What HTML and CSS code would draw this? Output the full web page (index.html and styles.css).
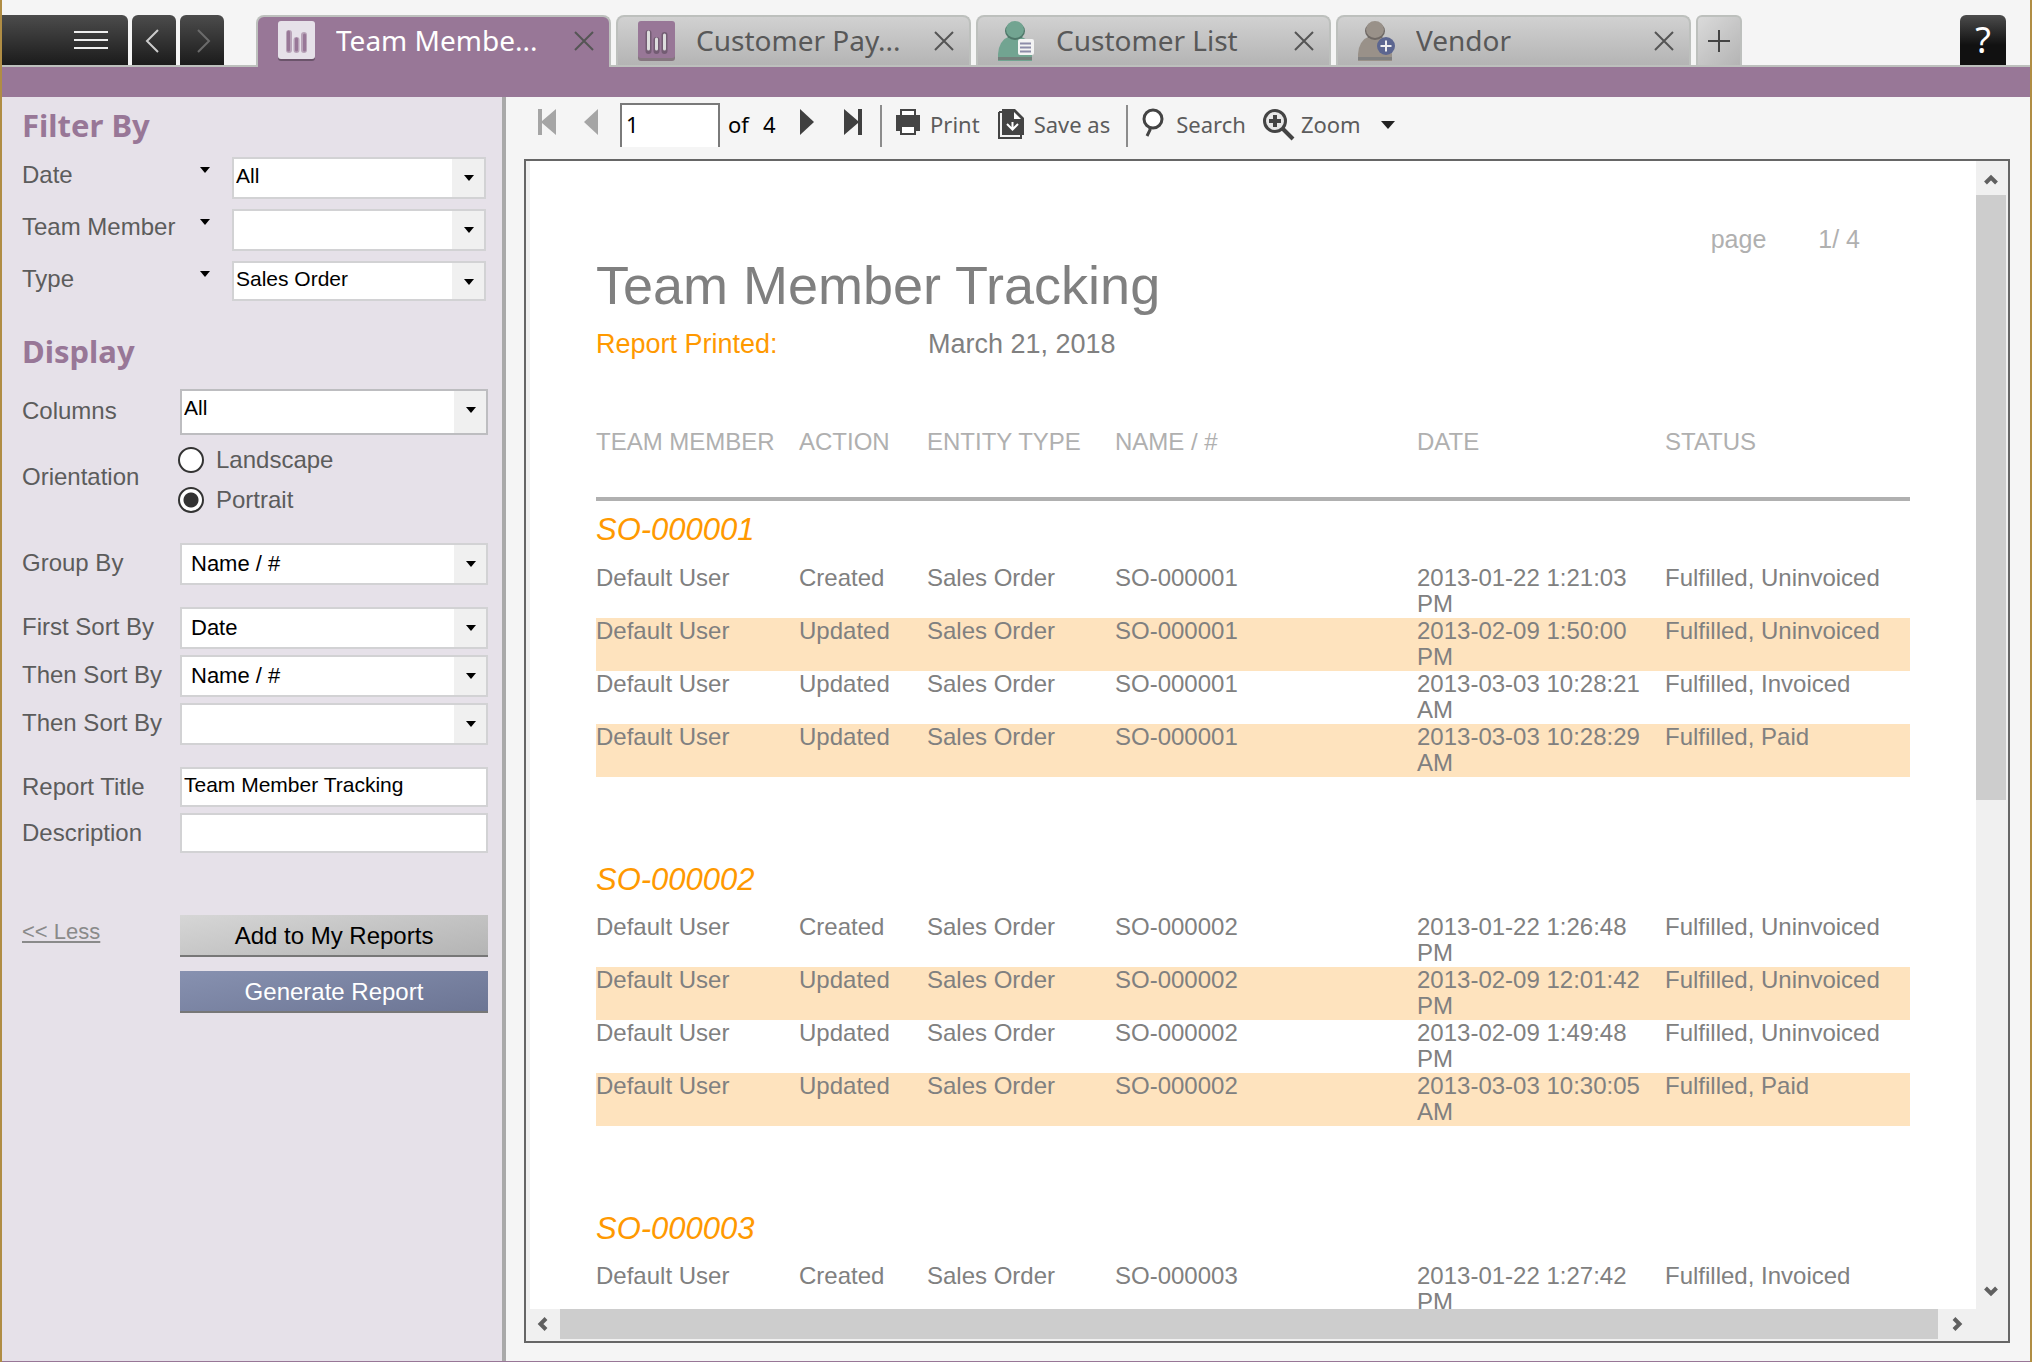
FILE: index.html
```html
<!DOCTYPE html>
<html lang="en">
<head>
<meta charset="utf-8">
<title>Team Member Tracking</title>
<link rel="stylesheet" href="styles.css">
</head>
<body>
<div class="app">
  <header class="topbar">
    <button class="dark menu" aria-label="Menu"><svg width="36" height="50" viewBox="0 0 36 50"><path d="M1 17h34M1 25h34M1 33h34" stroke="#eee" stroke-width="2"/></svg></button>
    <button class="dark nav" aria-label="Back"><svg width="44" height="50" viewBox="0 0 44 50"><path d="M26 15L15 26L26 37" fill="none" stroke="#ccc" stroke-width="2"/></svg></button>
    <button class="dark nav" aria-label="Forward"><svg width="44" height="50" viewBox="0 0 44 50"><path d="M18 15L29 26L18 37" fill="none" stroke="#6b6b6b" stroke-width="2"/></svg></button>
    <nav class="tabs">
      <div class="tab active">
        <svg class="tab-icon" width="37" height="40" viewBox="0 0 37 40"><rect y="4" width="37" height="36" rx="3" fill="#6b546b"/><rect width="37" height="38" rx="3" fill="#e6e1e9"/><path d="M11 12v17M18.500 19v10M26 14v15" stroke="#b8a3b8" stroke-width="6" stroke-linecap="round"/><path d="M10.500 11v18M18.500 18v11M26.500 14v15" stroke="#987797" stroke-width="3" stroke-linecap="round"/></svg>
        <a href="#" class="tab-name">Team Membe...</a>
        <button class="close" aria-label="Close"><svg width="20" height="20" viewBox="0 0 20 20"><path d="M1 1L19 19M19 1L1 19" stroke="#555" stroke-width="2"/></svg></button>
      </div>
      <div class="tab">
        <svg class="tab-icon" width="37" height="40" viewBox="0 0 37 40"><rect y="4" width="37" height="36" rx="3" fill="#85767f"/><rect width="37" height="37" rx="3" fill="#987797"/><path d="M10.500 12v18M18.500 19v11M26.500 14v16" stroke="#735c73" stroke-width="6" stroke-linecap="round"/><path d="M10.500 11v17M18.500 18v10M26.500 14v14" stroke="#ddd" stroke-width="3" stroke-linecap="round"/></svg>
        <a href="#" class="tab-name">Customer Pay...</a>
        <button class="close" aria-label="Close"><svg width="20" height="20" viewBox="0 0 20 20"><path d="M1 1L19 19M19 1L1 19" stroke="#555" stroke-width="2"/></svg></button>
      </div>
      <div class="tab">
        <svg class="tab-icon" width="37" height="40" viewBox="0 0 37 40"><path d="M0 40V33Q1 19 12 15H22Q33 19 34 33V40Z" fill="#72a491"/><path d="M0 36H34V39H0Z" fill="#74807b"/><ellipse cx="17" cy="10" rx="10" ry="9" fill="#4f7769"/><ellipse cx="17" cy="8.500" rx="9" ry="8.500" fill="#72a491"/><rect x="20" y="18" width="16" height="16" rx="2" fill="#f3f3f3"/><path d="M22 22.500h11M22 26.500h11M22 30.500h11" stroke="#8c8ca8" stroke-width="2"/></svg>
        <a href="#" class="tab-name">Customer List</a>
        <button class="close" aria-label="Close"><svg width="20" height="20" viewBox="0 0 20 20"><path d="M1 1L19 19M19 1L1 19" stroke="#555" stroke-width="2"/></svg></button>
      </div>
      <div class="tab">
        <svg class="tab-icon" width="37" height="40" viewBox="0 0 37 40"><path d="M0 40V33Q1 19 12 15H22Q33 19 34 33V40Z" fill="#999189"/><path d="M0 36H34V39H0Z" fill="#808080"/><ellipse cx="17" cy="10" rx="10" ry="9" fill="#6e6864"/><ellipse cx="17" cy="8.500" rx="9" ry="8.500" fill="#999189"/><circle cx="28" cy="25" r="9" fill="#5c6690"/><path d="M22.500 25h11M28 19.500v11" stroke="#eee" stroke-width="2"/></svg>
        <a href="#" class="tab-name">Vendor</a>
        <button class="close" aria-label="Close"><svg width="20" height="20" viewBox="0 0 20 20"><path d="M1 1L19 19M19 1L1 19" stroke="#555" stroke-width="2"/></svg></button>
      </div>
      <button class="tab-add" aria-label="New tab"><svg width="22" height="22" viewBox="0 0 22 22"><path d="M0 11h22M11 0v22" stroke="#444" stroke-width="2"/></svg></button>
    </nav>
    <button class="dark help" aria-label="Help">?</button>
  </header>
  <div class="band"></div>

  <div class="body">
    <form class="sidebar">
      <h2>Filter By</h2>
      <div class="filters">
        <label for="f-date">Date</label><i class="arrow"></i>
        <span class="select raised"><select id="f-date"><option>All</option></select></span>
        <label for="f-member">Team Member</label><i class="arrow"></i>
        <span class="select raised"><select id="f-member"><option></option></select></span>
        <label for="f-type">Type</label><i class="arrow"></i>
        <span class="select raised short"><select id="f-type"><option>Sales Order</option></select></span>
      </div>

      <h2 class="second">Display</h2>
      <div class="row columns">
        <label for="d-columns">Columns</label>
        <span class="select raised tall"><select id="d-columns"><option>All</option></select></span>
      </div>
      <div class="row orientation" role="radiogroup" aria-labelledby="orient">
        <span class="legend" id="orient">Orientation</span>
        <div class="radios">
          <label><input type="radio" name="orientation">Landscape</label>
          <label><input type="radio" name="orientation" checked>Portrait</label>
        </div>
      </div>
      <div class="row group">
        <label for="d-group">Group By</label>
        <span class="select"><select id="d-group"><option>Name / #</option></select></span>
      </div>
      <div class="row block">
        <label for="d-sort1">First Sort By</label>
        <span class="select"><select id="d-sort1"><option>Date</option></select></span>
      </div>
      <div class="row">
        <label for="d-sort2">Then Sort By</label>
        <span class="select"><select id="d-sort2"><option>Name / #</option></select></span>
      </div>
      <div class="row">
        <label for="d-sort3">Then Sort By</label>
        <span class="select"><select id="d-sort3"><option></option></select></span>
      </div>
      <div class="row block">
        <label for="d-title">Report Title</label>
        <input class="text" id="d-title" type="text" value="Team Member Tracking">
      </div>
      <div class="row">
        <label for="d-desc">Description</label>
        <input class="text" id="d-desc" type="text">
      </div>
      <div class="row actions">
        <a href="#" class="less">&lt;&lt; Less</a>
        <div class="buttons">
          <button type="button" class="btn">Add to My Reports</button>
          <button type="button" class="btn primary">Generate Report</button>
        </div>
      </div>
    </form>

    <main class="viewer">
      <div class="toolbar">
        <button class="tool first" aria-label="First page"><svg width="18" height="44" viewBox="0 0 18 44"><path d="M0 6h4v12L18 6v26L4 20v12H0z" fill="#a5a5a5"/></svg></button>
        <button class="tool prev" aria-label="Previous page"><svg width="14" height="44" viewBox="0 0 14 44"><path d="M14 6v26L0 19z" fill="#a5a5a5"/></svg></button>
        <input class="page-no" type="text" value="1" aria-label="Page">
        <span class="total"><span>of</span><span>4</span></span>
        <button class="tool next" aria-label="Next page"><svg width="14" height="44" viewBox="0 0 14 44"><path d="M0 6v26L14 19z" fill="#404040"/></svg></button>
        <button class="tool last" aria-label="Last page"><svg width="18" height="44" viewBox="0 0 18 44"><path d="M18 6h-4v12L0 6v26L14 20v12h4z" fill="#404040"/></svg></button>
        <span class="sep"></span>
        <button class="tool print"><svg width="24" height="44" viewBox="0 0 24 44"><path d="M4 6h16v6h4v16h-4v4H4v-4H0V12h4z" fill="#444"/><path d="M6 8h12v4H6zM6 24h12v6H6z" fill="#fff"/></svg>Print</button>
        <button class="tool save"><svg width="26" height="44" viewBox="0 0 26 44"><path d="M1 9v26h22v-4M1 9h4" fill="none" stroke="#444" stroke-width="2"/><path d="M4 6h13l9 9v17H4z" fill="#444"/><path d="M16 9v7h7z" fill="#fff"/><path d="M14.500 19v8M9 21l5.500 5.500L20 21" fill="none" stroke="#fff" stroke-width="2"/></svg>Save as</button>
        <span class="sep second"></span>
        <button class="tool search"><svg width="22" height="44" viewBox="0 0 22 44"><circle cx="11" cy="16" r="9" fill="#fff" stroke="#444" stroke-width="3"/><path d="M8 24v3L5 33" fill="none" stroke="#444" stroke-width="3"/></svg>Search</button>
        <button class="tool zoom"><svg width="33" height="44" viewBox="0 0 33 44"><circle cx="13" cy="18" r="10.500" fill="#e8e8e8" stroke="#444" stroke-width="3"/><path d="M13 12v12M7 18h12" stroke="#444" stroke-width="4"/><path d="M20 25l11 11" stroke="#444" stroke-width="4"/></svg>Zoom<svg class="caret" width="14" height="8" viewBox="0 0 14 8"><path d="M0 0h14L7 8z" fill="#222"/></svg></button>
      </div>

      <div class="frame">
        <div class="page">
          <p class="page-count"><span>page</span><span>1/ 4</span></p>
          <h1>Team Member Tracking</h1>
          <dl class="printed"><dt>Report Printed:</dt><dd>March 21, 2018</dd></dl>
          <table>
            <colgroup><col class="c-member"><col class="c-action"><col class="c-type"><col class="c-name"><col class="c-date"><col></colgroup>
            <thead><tr><th>TEAM MEMBER</th><th>ACTION</th><th>ENTITY TYPE</th><th>NAME / #</th><th>DATE</th><th>STATUS</th></tr></thead>
            <tbody>
              <tr class="so"><th colspan="6">SO-000001</th></tr>
              <tr><td>Default User</td><td>Created</td><td>Sales Order</td><td>SO-000001</td><td>2013-01-22 1:21:03 PM</td><td>Fulfilled, Uninvoiced</td></tr>
              <tr class="alt"><td>Default User</td><td>Updated</td><td>Sales Order</td><td>SO-000001</td><td>2013-02-09 1:50:00 PM</td><td>Fulfilled, Uninvoiced</td></tr>
              <tr><td>Default User</td><td>Updated</td><td>Sales Order</td><td>SO-000001</td><td>2013-03-03 10:28:21 AM</td><td>Fulfilled, Invoiced</td></tr>
              <tr class="alt"><td>Default User</td><td>Updated</td><td>Sales Order</td><td>SO-000001</td><td>2013-03-03 10:28:29 AM</td><td>Fulfilled, Paid</td></tr>
            </tbody>
            <tbody>
              <tr class="so"><th colspan="6">SO-000002</th></tr>
              <tr><td>Default User</td><td>Created</td><td>Sales Order</td><td>SO-000002</td><td>2013-01-22 1:26:48 PM</td><td>Fulfilled, Uninvoiced</td></tr>
              <tr class="alt"><td>Default User</td><td>Updated</td><td>Sales Order</td><td>SO-000002</td><td>2013-02-09 12:01:42 PM</td><td>Fulfilled, Uninvoiced</td></tr>
              <tr><td>Default User</td><td>Updated</td><td>Sales Order</td><td>SO-000002</td><td>2013-02-09 1:49:48 PM</td><td>Fulfilled, Uninvoiced</td></tr>
              <tr class="alt"><td>Default User</td><td>Updated</td><td>Sales Order</td><td>SO-000002</td><td>2013-03-03 10:30:05 AM</td><td>Fulfilled, Paid</td></tr>
            </tbody>
            <tbody>
              <tr class="so"><th colspan="6">SO-000003</th></tr>
              <tr><td>Default User</td><td>Created</td><td>Sales Order</td><td>SO-000003</td><td>2013-01-22 1:27:42 PM</td><td>Fulfilled, Invoiced</td></tr>
            </tbody>
          </table>
        </div>
        <div class="vbar">
          <button aria-label="Scroll up"><svg width="30" height="34" viewBox="0 0 30 34"><path d="M9.500 22L15 16.500L20.500 22" fill="none" stroke="#606060" stroke-width="4"/></svg></button>
          <div class="vtrack"><div class="vthumb"></div></div>
          <button aria-label="Scroll down"><svg width="30" height="34" viewBox="0 0 30 34"><path d="M9.500 13L15 18.500L20.500 13" fill="none" stroke="#606060" stroke-width="4"/></svg></button>
        </div>
        <div class="hbar">
          <button aria-label="Scroll left"><svg width="34" height="30" viewBox="0 0 34 30"><path d="M20 9.500L14.500 15L20 20.500" fill="none" stroke="#606060" stroke-width="4"/></svg></button>
          <div class="hthumb"></div>
          <button aria-label="Scroll right"><svg width="38" height="30" viewBox="0 0 38 30"><path d="M16 9.500L21.500 15L16 20.500" fill="none" stroke="#606060" stroke-width="4"/></svg></button>
        </div>
        <div class="corner"></div>
      </div>
    </main>
  </div>
</div>
</body>
</html>
```

FILE: styles.css
```css
* { box-sizing: border-box; }

body {
  margin: 0;
  background: #f5f5f5;
  color: #5c5c5c;
  font-family: "Liberation Sans", Arial, sans-serif;
  font-size: 24px;
}

button {
  border: 0;
  padding: 0;
  background: none;
  color: inherit;
  font: inherit;
}

svg { display: block; flex: none; }

.app {
  display: flex;
  flex-direction: column;
  height: 100vh;
  border: solid #b08d44;
  border-width: 0 2px;
  box-shadow: inset 0 -1px #987797;
}

/* Top bar */
.topbar {
  display: flex;
  flex: none;
  gap: 4px;
  padding: 15px 24px 0 0;
  border-bottom: 2px solid #bdc0bd;
  font-family: "Noto Sans", "Open Sans", sans-serif;
}

.dark {
  height: 50px;
  border-radius: 6px 6px 0 0;
  background: linear-gradient(#4c4c4c, #1b1b1b);
}

.menu {
  display: flex;
  justify-content: flex-end;
  width: 126px;
  padding-right: 19px;
  border-radius: 0 6px 0 0;
}

.nav { width: 44px; }

.help {
  width: 46px;
  margin-left: auto;
  background: linear-gradient(#4c4c4c, #111 60%);
  color: #fff;
  font-size: 36px;
  line-height: 50px;
}

.tabs {
  display: flex;
  flex: 0 1 1488px;
  gap: 5px;
  min-width: 0;
  margin-left: 28px;
}

.tab {
  display: flex;
  flex: 0 1 355px;
  align-items: center;
  height: 50px;
  padding: 0 15px 0 20px;
  border: solid #bdc0bd;
  border-width: 2px 2px 0;
  border-radius: 8px 8px 0 0;
  background: linear-gradient(#d1d1d1, #b4b4b4);
}

.tab.active {
  height: 52px;
  margin-bottom: -2px;
  padding-bottom: 2px;
  background: #987797;
}

.tab-name {
  flex: 1;
  margin-left: 21px;
  padding-bottom: 2px;
  overflow: hidden;
  color: #585858;
  font-size: 28px;
  line-height: 42px;
  text-decoration: none;
  white-space: nowrap;
}

.active .tab-name { color: #fff; }

.tab-add {
  display: flex;
  align-items: center;
  justify-content: center;
  width: 46px;
  height: 50px;
  border: solid #bdc0bd;
  border-width: 2px 2px 0;
  border-radius: 6px 6px 0 0;
  background: linear-gradient(135deg, #dadada, #b4b4b4);
}

.band { flex: none; height: 30px; background: #987797; }

.body { display: flex; flex: 1; min-height: 0; padding-bottom: 1px; }

/* Sidebar */
.sidebar {
  flex: none;
  width: 504px;
  padding: 8px 14px 0 20px;
  border-right: 4px solid #a9a9a9;
  background: #e6e1e9;
}

h2 {
  margin: 0 0 12px;
  color: #987797;
  font: bold 31px/40px "Noto Sans", "Open Sans", sans-serif;
}

h2.second { margin: 30px 0 18px; }

.filters {
  display: grid;
  grid-template-columns: 178px 32px 1fr;
  gap: 10px 0;
  padding-right: 2px;
  line-height: 36px;
}

.arrow {
  width: 10px;
  height: 6px;
  margin-top: 10px;
  background: #000;
  clip-path: polygon(0 0, 100% 0, 50% 100%);
}

.select { position: relative; display: block; height: 42px; }

.select::after {
  content: "";
  position: absolute;
  top: 18px;
  right: 12px;
  width: 10px;
  height: 6px;
  background: #000;
  clip-path: polygon(0 0, 100% 0, 50% 100%);
  pointer-events: none;
}

select {
  display: block;
  width: 100%;
  height: 100%;
  padding: 0 34px 2px 9px;
  border: 2px solid #d2d2d4;
  border-radius: 0;
  appearance: none;
  background: linear-gradient(#f0f0f0, #f0f0f0) right / 32px 100% no-repeat #fff;
  color: #000;
  font: 22px "Liberation Sans", Arial, sans-serif;
}

.raised select { padding: 0 34px 6px 2px; font-size: 21px; }
.select.short { height: 40px; }
.select.tall { height: 46px; }
.tall select { padding-bottom: 10px; border-color: #bdbdc0; }

.row {
  display: grid;
  grid-template-columns: 158px 1fr;
  margin-top: 6px;
  line-height: 40px;
}

.columns { margin-top: 0; line-height: 44px; }
.orientation { margin-top: 12px; }
.group { margin-top: 30px; }
.block { margin-top: 22px; }
.actions { margin-top: 62px; }

.legend { line-height: 60px; }

.radios { display: grid; gap: 14px; margin-left: -2px; line-height: 26px; }
.radios label { display: flex; align-items: center; gap: 12px; }

.radios input {
  width: 26px;
  height: 26px;
  margin: 0;
  border: 2px solid #333;
  border-radius: 50%;
  appearance: none;
  background: #fff;
}

.radios input:checked { background: radial-gradient(circle, #333 7px, #fff 8px); }

.text {
  width: 100%;
  height: 40px;
  padding: 0 2px 4px;
  border: 2px solid #d2d2d4;
  color: #000;
  font: 21px "Liberation Sans", Arial, sans-serif;
}

.less { color: #8a8a8a; font-size: 22px; line-height: 34px; }

.buttons { display: grid; gap: 14px; }

.btn {
  height: 42px;
  padding-top: 2px;
  border-bottom: 2px solid #777;
  background: linear-gradient(170deg, #d6d6d6, #b4b4b4);
  color: #000;
  line-height: 38px;
}

.btn.primary { background: linear-gradient(170deg, #8791b0, #6c7594); color: #fff; }

/* Report viewer */
.viewer {
  display: flex;
  flex: 1;
  flex-direction: column;
  min-width: 0;
  padding: 6px 20px 18px 18px;
}

.toolbar {
  display: flex;
  flex: none;
  height: 56px;
  padding-left: 14px;
  font: 22px/42px "Noto Sans", "Open Sans", sans-serif;
}

.tool { display: flex; height: 44px; white-space: nowrap; }
.prev { margin-left: 28px; }

.page-no {
  width: 100px;
  height: 44px;
  margin-left: 22px;
  padding: 0 4px 4px;
  border: solid #7a7a7a;
  border-width: 2px 2px 0;
  font: inherit;
}

.total { display: flex; gap: 14px; width: 72px; margin-left: 8px; color: #000; }
.last { margin-left: 30px; }
.sep { width: 2px; height: 42px; margin: 2px 14px 0 18px; background: #8c8c8c; }
.sep.second { margin-left: 16px; }
.print, .save { gap: 10px; }
.save { margin-left: 18px; }
.search { gap: 12px; }
.zoom { gap: 6px; margin-left: 16px; }
.caret { margin: 18px 0 0 14px; }

.frame {
  display: grid;
  flex: 1;
  grid-template: minmax(0, 1fr) 30px / minmax(0, 1fr) 30px;
  min-height: 0;
  padding: 0 2px 2px 0;
  border: 2px solid #666;
  background: #f0f0f0;
}

.page {
  margin-left: 4px;
  padding: 64px 66px 0;
  overflow: hidden;
  background: #fff;
  color: #808080;
}

.page-count {
  display: flex;
  justify-content: flex-end;
  gap: 52px;
  margin: 0;
  padding-right: 50px;
  color: #b0b0b0;
  font-size: 25px;
  line-height: 28px;
}

h1 { margin: 0; font-size: 54px; font-weight: normal; line-height: 64px; }

.printed { display: flex; margin: 9px 0 0; font-size: 27px; line-height: 36px; }
.printed dt { width: 332px; color: #ff9900; }
.printed dd { margin: 0; }

table {
  width: 100%;
  margin-top: 66px;
  border-collapse: collapse;
  table-layout: fixed;
}

.c-member { width: 203px; }
.c-action { width: 128px; }
.c-type { width: 188px; }
.c-name { width: 302px; }
.c-date { width: 248px; }

th { padding: 0; font-weight: normal; text-align: left; }
thead th { height: 71px; border-bottom: 4px solid #b0b0b0; color: #b0b0b0; line-height: 28px; vertical-align: top; }
td { height: 53px; padding: 0 8px 0 0; line-height: 26px; vertical-align: top; }
td:last-child { padding: 0; }

.so th {
  height: 66px;
  color: #ff9900;
  font-size: 31px;
  font-style: italic;
  line-height: 58px;
  vertical-align: top;
}

tbody + tbody .so th { height: 137px; padding-top: 74px; }
.alt { background: #fee3be; }

.vbar { display: flex; flex-direction: column; }
.vtrack { flex: 1; }
.vthumb { height: 56%; background: #cdcdcd; }
.hbar { display: flex; }
.hthumb { flex: 1; background: #cdcdcd; }
```
